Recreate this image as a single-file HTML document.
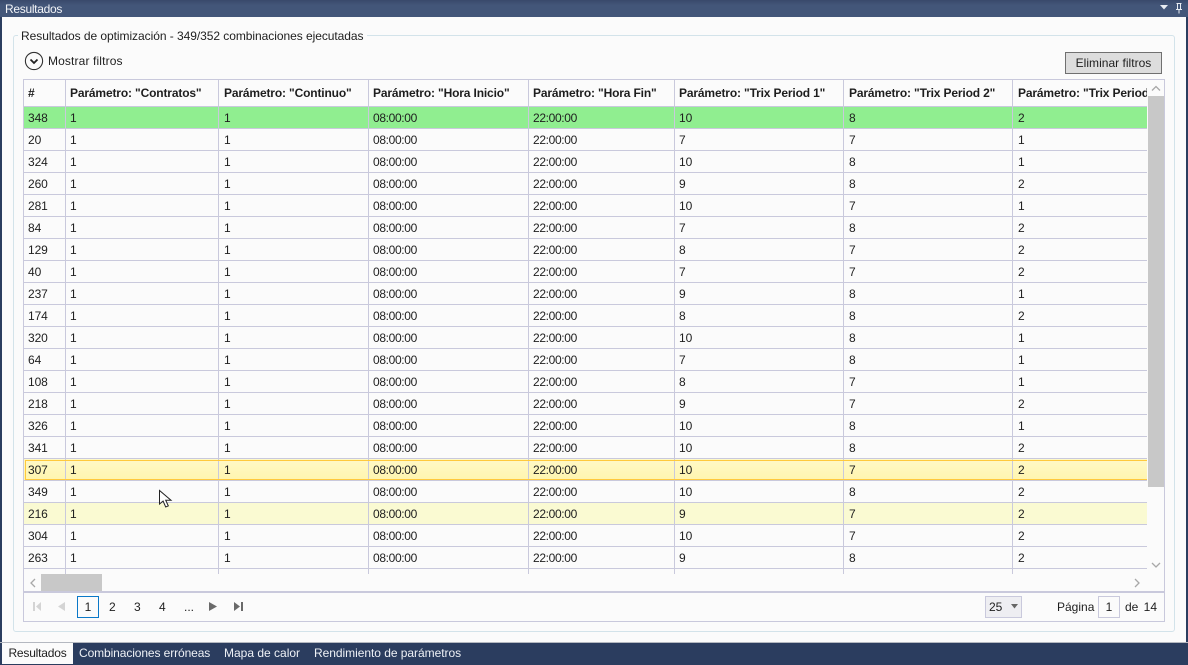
<!DOCTYPE html>
<html lang="es"><head><meta charset="utf-8"><title>Resultados</title>
<style>
html,body{margin:0;padding:0}
body{width:1188px;height:665px;position:relative;overflow:hidden;background:#2b3d5f;font-family:"Liberation Sans",sans-serif;font-size:12px;color:#1e1e1e}
.a{position:absolute;white-space:nowrap;line-height:16px}
#title{position:absolute;left:0;top:0;width:1188px;height:17px;background:linear-gradient(#39496b,#435679 30%,#435679)}
#main{position:absolute;left:2px;top:17px;width:1184px;height:625px;background:#fbfbfb}
#line{position:absolute;left:0;top:642px;width:1188px;height:1px;background:#b4b8c0}
#group{position:absolute;left:13px;top:35px;width:1160px;height:595px;border:1px solid #d3e3ea;border-radius:3px}
#grid{position:absolute;left:23px;top:79px;width:1140px;height:541px;border:1px solid #c9c9dc}
#tw{position:absolute;left:24px;top:80px;width:1123px;height:494px;overflow:hidden}
table{border-collapse:separate;border-spacing:0;table-layout:fixed;width:1169px;position:absolute;left:0;top:0}
td,th{text-align:left;font-weight:400;overflow:hidden;white-space:nowrap;font-size:12px;border-right:1px solid #c9c9dc;border-bottom:1px solid #c9c9dc;box-sizing:border-box}
td{padding:2px 0 0 4px;height:22px;line-height:19px;letter-spacing:-.1px}
th{padding:0 0 0 4px;height:27px;line-height:25px;font-weight:700;color:#1e1e1e;letter-spacing:-.15px}
td:nth-child(3),th:nth-child(3),td:nth-child(7),th:nth-child(7),td:nth-child(8),th:nth-child(8){padding-left:5px}
td:nth-child(4),td:nth-child(5){letter-spacing:-.35px}
.g td{background:#90ee90}
.y td{background:linear-gradient(#fff9c8,#fff5ae)}
.l td{background:#fafad2}
#sel{position:absolute;left:25px;top:460px;width:1122px;height:18px;border:1px solid #ffc93c;border-right:0;box-sizing:content-box}
#vtrack{position:absolute;left:1147px;top:80px;width:17px;height:494px;background:#fbfbfb}
#vthumb{position:absolute;left:1148px;top:96px;width:16px;height:391px;background:#c8c8c8}
#hthumb{position:absolute;left:41px;top:574px;width:61px;height:17px;background:#c8c8c8}
#pline{position:absolute;left:24px;top:591px;width:1140px;height:2px;background:#c9c9dc}
.ext{position:absolute;top:569px;width:1px;height:5px;background:#c9c9dc}
</style></head><body>
<div id="title"></div>
<div class="a" style="left:5px;top:1px;color:#f2f4f8;letter-spacing:-.3px">Resultados</div>
<svg class="a" style="left:1158px;top:2px" width="28" height="13" viewBox="0 0 28 13"><path d="M2 3h8L6 7.5z" fill="#e8ecf2"/><path d="M18.5 1.5h5M19.5 1.5v5.5M22.5 1.5v5.5M18 7.5h6M21 7.5v4" stroke="#e8ecf2" fill="none"/></svg>
<div id="main"></div><div id="line"></div>
<div id="group"></div>
<div class="a" style="left:18px;top:28px;background:#fbfbfb;padding:0 3px;letter-spacing:-.05px;line-height:16px">Resultados de optimización - 349/352 combinaciones ejecutadas</div>
<svg class="a" style="left:24px;top:51px" width="20" height="20" viewBox="0 0 20 20"><circle cx="10" cy="10" r="8.6" fill="none" stroke="#333" stroke-width="1.1"/><path d="M6.5 8.5 10 12l3.5-3.5" fill="none" stroke="#222" stroke-width="1.8"/></svg>
<div class="a" style="left:48px;top:53px;letter-spacing:.13px">Mostrar filtros</div>
<div class="a" style="left:1065px;top:52px;width:95px;height:20px;border:1px solid #707070;background:#dddddd;text-align:center;line-height:21px;letter-spacing:.02px">Eliminar filtros</div>
<div id="grid"></div>
<div id="tw"><table>
<colgroup><col style="width:42px"><col style="width:153px"><col style="width:150px"><col style="width:160px"><col style="width:146px"><col style="width:169px"><col style="width:169px"><col style="width:180px"></colgroup>
<tr><th>#</th><th>Parámetro: "Contratos"</th><th>Parámetro: "Continuo"</th><th>Parámetro: "Hora Inicio"</th><th>Parámetro: "Hora Fin"</th><th>Parámetro: "Trix Period 1"</th><th>Parámetro: "Trix Period 2"</th><th>Parámetro: "Trix Period 3"</th></tr>
<tr class="g"><td>348</td><td>1</td><td>1</td><td>08:00:00</td><td>22:00:00</td><td>10</td><td>8</td><td>2</td></tr>
<tr><td>20</td><td>1</td><td>1</td><td>08:00:00</td><td>22:00:00</td><td>7</td><td>7</td><td>1</td></tr>
<tr><td>324</td><td>1</td><td>1</td><td>08:00:00</td><td>22:00:00</td><td>10</td><td>8</td><td>1</td></tr>
<tr><td>260</td><td>1</td><td>1</td><td>08:00:00</td><td>22:00:00</td><td>9</td><td>8</td><td>2</td></tr>
<tr><td>281</td><td>1</td><td>1</td><td>08:00:00</td><td>22:00:00</td><td>10</td><td>7</td><td>1</td></tr>
<tr><td>84</td><td>1</td><td>1</td><td>08:00:00</td><td>22:00:00</td><td>7</td><td>8</td><td>2</td></tr>
<tr><td>129</td><td>1</td><td>1</td><td>08:00:00</td><td>22:00:00</td><td>8</td><td>7</td><td>2</td></tr>
<tr><td>40</td><td>1</td><td>1</td><td>08:00:00</td><td>22:00:00</td><td>7</td><td>7</td><td>2</td></tr>
<tr><td>237</td><td>1</td><td>1</td><td>08:00:00</td><td>22:00:00</td><td>9</td><td>8</td><td>1</td></tr>
<tr><td>174</td><td>1</td><td>1</td><td>08:00:00</td><td>22:00:00</td><td>8</td><td>8</td><td>2</td></tr>
<tr><td>320</td><td>1</td><td>1</td><td>08:00:00</td><td>22:00:00</td><td>10</td><td>8</td><td>1</td></tr>
<tr><td>64</td><td>1</td><td>1</td><td>08:00:00</td><td>22:00:00</td><td>7</td><td>8</td><td>1</td></tr>
<tr><td>108</td><td>1</td><td>1</td><td>08:00:00</td><td>22:00:00</td><td>8</td><td>7</td><td>1</td></tr>
<tr><td>218</td><td>1</td><td>1</td><td>08:00:00</td><td>22:00:00</td><td>9</td><td>7</td><td>2</td></tr>
<tr><td>326</td><td>1</td><td>1</td><td>08:00:00</td><td>22:00:00</td><td>10</td><td>8</td><td>1</td></tr>
<tr><td>341</td><td>1</td><td>1</td><td>08:00:00</td><td>22:00:00</td><td>10</td><td>8</td><td>2</td></tr>
<tr class="y"><td>307</td><td>1</td><td>1</td><td>08:00:00</td><td>22:00:00</td><td>10</td><td>7</td><td>2</td></tr>
<tr><td>349</td><td>1</td><td>1</td><td>08:00:00</td><td>22:00:00</td><td>10</td><td>8</td><td>2</td></tr>
<tr class="l"><td>216</td><td>1</td><td>1</td><td>08:00:00</td><td>22:00:00</td><td>9</td><td>7</td><td>2</td></tr>
<tr><td>304</td><td>1</td><td>1</td><td>08:00:00</td><td>22:00:00</td><td>10</td><td>7</td><td>2</td></tr>
<tr><td>263</td><td>1</td><td>1</td><td>08:00:00</td><td>22:00:00</td><td>9</td><td>8</td><td>2</td></tr>
</table></div>
<div class="ext" style="left:65px"></div><div class="ext" style="left:218px"></div><div class="ext" style="left:368px"></div><div class="ext" style="left:528px"></div><div class="ext" style="left:674px"></div><div class="ext" style="left:843px"></div><div class="ext" style="left:1012px"></div>
<div id="sel"></div>
<div id="vtrack"></div><div id="vthumb"></div>
<svg class="a" style="left:1148px;top:80px" width="16" height="494" viewBox="0 0 16 494"><path d="M4 10.5l4-4 4 4M4 483l4 4 4-4" fill="none" stroke="#a8a8a8" stroke-width="1.3"/></svg>
<div id="hthumb"></div>
<svg class="a" style="left:24px;top:574px" width="1124" height="17" viewBox="0 0 1124 17"><path d="M11 5l-4 4 4 4M1111 5l4 4-4 4" fill="none" stroke="#a8a8a8" stroke-width="1.3"/></svg>
<div id="pline"></div>
<svg class="a" style="left:30px;top:600px" width="220" height="14" viewBox="0 0 220 14"><g fill="#d4d4d4"><rect x="3" y="2" width="2" height="9"/><path d="M11 2v9L6 6.5z"/><path d="M35 2v9l-7-4.5z"/></g><g fill="#6a6a6a"><path d="M179 2v9l8-4.5z"/><path d="M204 2v9l6-4.5z"/><rect x="211" y="2" width="2" height="9"/></g></svg>
<div class="a" style="left:77px;top:596px;width:20px;height:20px;border:1px solid #0a78c8;text-align:center;line-height:21px">1</div>
<div class="a" style="left:109px;top:599px">2</div>
<div class="a" style="left:134px;top:599px">3</div>
<div class="a" style="left:159px;top:599px">4</div>
<div class="a" style="left:184px;top:599px">...</div>
<div class="a" style="left:985px;top:596px;width:35px;height:20px;border:1px solid #c9c9dc;background:#eeeef2;line-height:21px;text-indent:3px">25</div>
<svg class="a" style="left:1010px;top:604px" width="10" height="6" viewBox="0 0 10 6"><path d="M1 0h7L4.5 4.5z" fill="#666"/></svg>
<div class="a" style="left:1057px;top:599px">Página</div>
<div class="a" style="left:1098px;top:596px;width:20px;height:20px;border:1px solid #c9c9dc;text-align:center;line-height:21px">1</div>
<div class="a" style="left:1125px;top:599px;word-spacing:2px">de 14</div>
<svg class="a" style="left:158px;top:489px" width="16" height="22" viewBox="0 0 16 22"><path d="M1.5 1.5V15l3.6-3 2.6 6 2.6-1.1-2.6-5.7H13z" fill="#fff" stroke="#222" stroke-width="1"/></svg>
<div class="a" style="left:2px;top:643px;width:71px;height:21px;background:#fbfbfb;text-align:center;line-height:20px;letter-spacing:-.2px">Resultados</div>
<div class="a" style="left:79px;top:645px;color:#eef1f6;letter-spacing:-.1px">Combinaciones erróneas</div>
<div class="a" style="left:224px;top:645px;color:#eef1f6">Mapa de calor</div>
<div class="a" style="left:314px;top:645px;color:#eef1f6;letter-spacing:-.04px">Rendimiento de parámetros</div>
</body></html>
